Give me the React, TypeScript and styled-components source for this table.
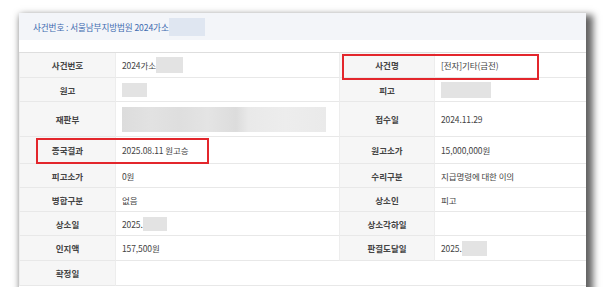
import React from "react";
import styled, { createGlobalStyle } from "styled-components";

const GlobalStyle = createGlobalStyle`
  html, body {
    margin: 0;
    background: #ffffff;
  }
  body {
    font-family: "Noto Sans CJK KR", "Noto Sans", sans-serif;
  }
`;

const Page = styled.div`
  padding: 13px 0 0 19px;
`;

const Window = styled.div`
  position: relative;
  width: 567px;
  height: 274px;
  background: #ffffff;
  box-shadow: 4px 5px 7px 3px rgba(0, 0, 0, 0.62);
`;

const Header = styled.div`
  height: 27px;
  display: flex;
  align-items: center;
  padding-left: 14px;
  background: #f3f5f9;
  color: #3f6cb0;
  font-size: 8.6px;
  letter-spacing: -0.1px;
`;

const Table = styled.div`
  margin-top: 12px;
  border-top: 1px solid #dedede;
  display: grid;
  grid-template-columns: 97px 223px 96px 1fr;
  grid-template-rows: 25px 24px 35px 27px 24px 24px 24px 25px 25px;
`;

const Label = styled.div`
  box-sizing: border-box;
  display: flex;
  align-items: center;
  justify-content: center;
  background: #f6f6f6;
  border-bottom: 1px solid #e8e8e8;
  border-left: 1px solid #ededed;
  border-right: 1px solid #ededed;
  color: #444444;
  font-size: 8.5px;
  font-weight: 700;
`;

const Value = styled.div<{ $span?: number }>`
  box-sizing: border-box;
  display: flex;
  align-items: center;
  padding-left: 6px;
  border-bottom: 1px solid #e8e8e8;
  color: #444444;
  font-size: 8.5px;
  letter-spacing: -0.1px;
  grid-column: ${(p) => (p.$span ? `span ${p.$span}` : "auto")};
`;

const Redact = styled.span<{ $w: number; $h: number; $tone?: string }>`
  display: inline-block;
  width: ${(p) => p.$w}px;
  height: ${(p) => p.$h}px;
  background: ${(p) => p.$tone ?? "#e3e3e3"};
  filter: blur(0.5px);
`;

const Mark = styled.div<{ $x: number; $y: number; $w: number; $h: number }>`
  position: absolute;
  left: ${(p) => p.$x}px;
  top: ${(p) => p.$y}px;
  width: ${(p) => p.$w}px;
  height: ${(p) => p.$h}px;
  box-sizing: border-box;
  border: 2px solid #e3262c;
`;

const courtBlur =
  "linear-gradient(90deg, #dcdcdc 0%, #e2e2e2 14%, #dedede 28%, #e4e4e4 42%, #dcdcdc 56%, #e9e9e9 62%, #ededed 80%, #eaeaea 100%)";

export default function App() {
  return (
    <>
      <GlobalStyle />
      <Page>
        <Window>
          <Header>
            사건번호 : 서울남부지방법원 2024가소
            <Redact $w={36} $h={18} $tone="#dfe6f1" />
          </Header>
          <Table>
            <Label>사건번호</Label>
            <Value>
              2024가소
              <Redact $w={27} $h={16} />
            </Value>
            <Label>사건명</Label>
            <Value>[전자]기타(금전)</Value>

            <Label>원고</Label>
            <Value>
              <Redact $w={25} $h={14} />
            </Value>
            <Label>피고</Label>
            <Value>
              <Redact $w={50} $h={16} />
            </Value>

            <Label>재판부</Label>
            <Value>
              <Redact $w={204} $h={25} $tone={courtBlur} />
            </Value>
            <Label>접수일</Label>
            <Value>2024.11.29</Value>

            <Label>종국결과</Label>
            <Value>2025.08.11 원고승</Value>
            <Label>원고소가</Label>
            <Value>15,000,000원</Value>

            <Label>피고소가</Label>
            <Value>0원</Value>
            <Label>수리구분</Label>
            <Value>지급명령에 대한 이의</Value>

            <Label>병합구분</Label>
            <Value>없음</Value>
            <Label>상소인</Label>
            <Value>피고</Value>

            <Label>상소일</Label>
            <Value>
              2025.
              <Redact $w={24} $h={14} />
            </Value>
            <Label>상소각하일</Label>
            <Value />

            <Label>인지액</Label>
            <Value>157,500원</Value>
            <Label>판결도달일</Label>
            <Value>
              2025.
              <Redact $w={25} $h={15} />
            </Value>

            <Label>확정일</Label>
            <Value $span={3} />
          </Table>
          <Mark $x={323} $y={41} $w={197} $h={26} />
          <Mark $x={17} $y={125} $w={173} $h={26} />
        </Window>
      </Page>
    </>
  );
}
